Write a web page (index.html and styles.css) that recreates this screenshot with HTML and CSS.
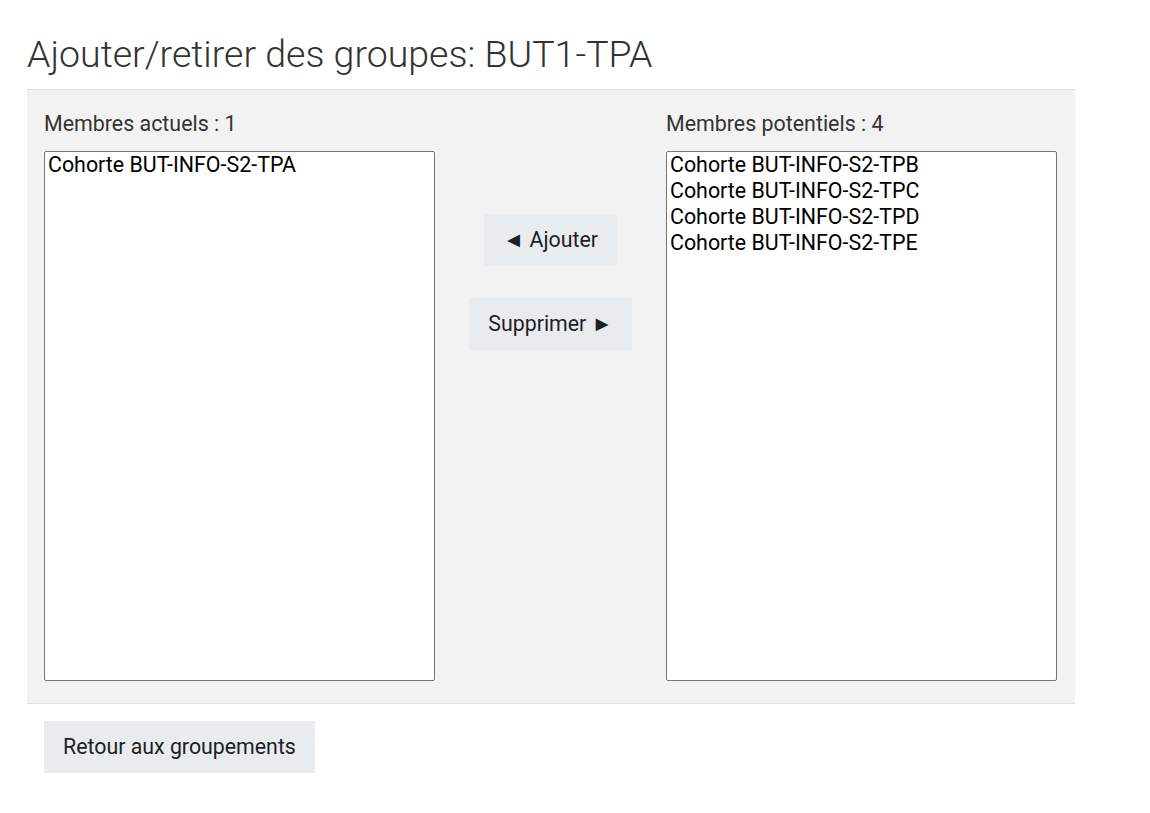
FILE: index.html
```html
<!DOCTYPE html>
<html lang="fr">
<head>
<meta charset="utf-8">
<title>Ajouter/retirer des groupes</title>
<link rel="stylesheet" href="styles.css">
</head>
<body>
<div class="page">
  <h2 class="title">Ajouter/retirer des groupes: BUT1-TPA</h2>
  <div class="panel">
    <div class="col">
      <label class="lbl" for="cur">Membres actuels : 1</label>
      <select id="cur" class="list" multiple size="20">
        <option>Cohorte BUT-INFO-S2-TPA</option>
      </select>
    </div>
    <div class="mid">
      <button class="btn">◄ Ajouter</button>
      <button class="btn">Supprimer ►</button>
    </div>
    <div class="col">
      <label class="lbl" for="pot">Membres potentiels : 4</label>
      <select id="pot" class="list" multiple size="20">
        <option>Cohorte BUT-INFO-S2-TPB</option>
        <option>Cohorte BUT-INFO-S2-TPC</option>
        <option>Cohorte BUT-INFO-S2-TPD</option>
        <option>Cohorte BUT-INFO-S2-TPE</option>
      </select>
    </div>
  </div>
  <div class="footer">
    <button class="btn">Retour aux groupements</button>
  </div>
</div>
</body>
</html>
```

FILE: styles.css
```css
html, body {
  margin: 0;
  padding: 0;
  background: #ffffff;
}
body {
  font-family: Roboto, "Liberation Sans", sans-serif;
  color: #1d2125;
}
.page {
  padding: 32px 0 0 27px;
  width: 1048px;
}
.title {
  margin: 0 0 12px 0;
  font-weight: 300;
  font-size: 37.5px;
  line-height: 45px;
  color: #333333;
}
.panel {
  background: #f2f2f2;
  border-top: 1px solid #dee2e6;
  border-bottom: 1px solid #dee2e6;
  display: grid;
  grid-template-columns: 391px 1fr 391px;
  padding: 19px 18px 22px 17px;
}
.col {
  display: flex;
  flex-direction: column;
}
.lbl {
  font-size: 21.4px;
  line-height: 30px;
  color: #333333;
  margin-bottom: 12px;
}
.list {
  height: 530px;
  box-sizing: border-box;
  border: 1px solid #767676;
  border-radius: 2px;
  background: #ffffff;
  font-family: Roboto, "Liberation Sans", sans-serif;
  font-size: 21.4px;
  color: #000000;
  padding: 0 3px;
  margin: 0;
  overflow: hidden;
}
.list option {
  padding: 0.3px 0 0 0;
}
.mid {
  display: flex;
  flex-direction: column;
  align-items: center;
  gap: 32px;
  padding-top: 105px;
}
.btn {
  font-family: Roboto, "Liberation Sans", sans-serif;
  font-size: 21.33px;
  line-height: 30px;
  padding: 11px 19px;
  background: #e9ecef;
  color: #1d2125;
  border: 0;
  border-radius: 0;
  margin: 0;
}
.footer {
  padding: 17px 0 0 17px;
}
```
